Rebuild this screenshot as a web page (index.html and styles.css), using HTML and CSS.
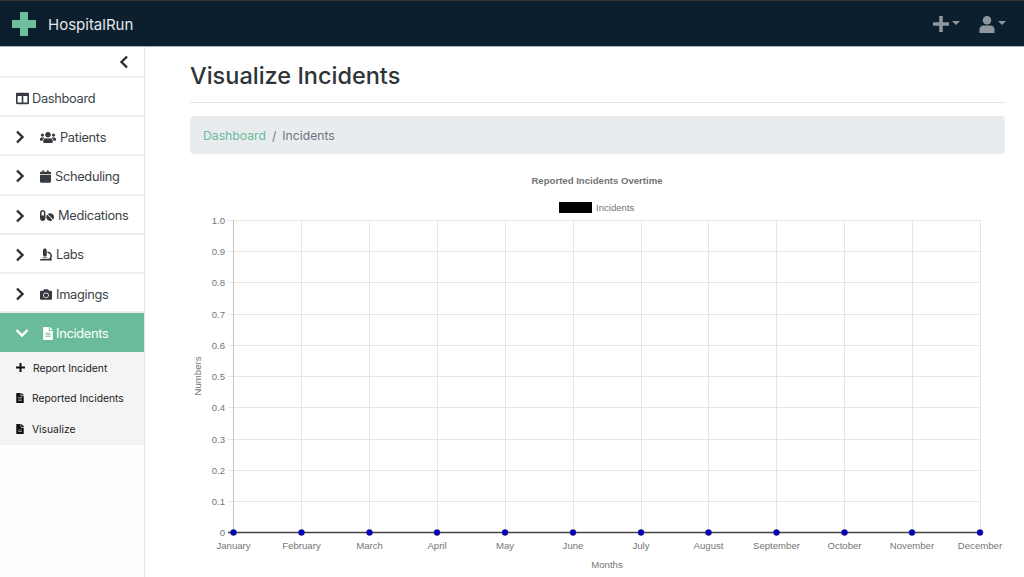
FILE: index.html
```html
<!DOCTYPE html>
<html lang="en">
<head>
    <meta charset="UTF-8">
    <title>HospitalRun</title>
    <link rel="stylesheet" href="styles.css">
</head>
<body>
    <nav class="navbar">
        <div class="brand">
            <svg class="logo" width="24" height="24" viewBox="0 0 24 24"><path d="M8 0h8v8h8v8h-8v8H8v-8H0V8h8z" fill="#6fbf9f"/></svg>
            <span>HospitalRun</span>
        </div>
        <div class="nav-icons">
            <div class="nav-item">
                <svg width="16" height="16" viewBox="0 0 16 16"><path d="M6.2 0h3.6v6.2H16v3.6H9.800V16H6.200V9.800H0V6.200h6.200z" fill="#8f979e"/></svg>
                <i class="caret"></i>
            </div>
            <div class="nav-item">
                <svg width="16" height="17" viewBox="0 0 16 18"><circle cx="8" cy="4.500" r="4.500" fill="#8f979e"/><path d="M0 18v-3.500C0 11.500 2 10 4.500 10h7c2.500 0 4.500 1.500 4.500 4.500V18z" fill="#8f979e"/></svg>
                <i class="caret"></i>
            </div>
        </div>
    </nav>
    <div class="layout">
        <aside class="sidebar">
            <div class="collapse-row">
                <svg width="10" height="14" viewBox="0 0 10 14"><path d="M8 1.500 2.500 7 8 12.500" fill="none" stroke="#2b2f33" stroke-width="2.400"/></svg>
            </div>
            <a class="side-item plain">
                <svg class="icon" width="13" height="13" viewBox="0 0 512 512"><path d="M464 32H48C21.490 32 0 53.490 0 80v352c0 26.510 21.490 48 48 48h416c26.510 0 48-21.490 48-48V80c0-26.510-21.490-48-48-48zM224 416H64V160h160v256zm224 0H288V160h160v256z"/></svg>
                Dashboard
            </a>
            <a class="side-item">
                <svg class="chev" width="10" height="14" viewBox="0 0 10 14"><path d="M2 1.500 7.500 7 2 12.500" fill="none" stroke="#2b2f33" stroke-width="2.400"/></svg>
                <svg class="icon" width="16" height="13" viewBox="0 0 640 512"><path d="M96 224c35.300 0 64-28.700 64-64s-28.700-64-64-64-64 28.700-64 64 28.700 64 64 64zm448 0c35.300 0 64-28.700 64-64s-28.700-64-64-64-64 28.700-64 64 28.700 64 64 64zm32 32h-64c-17.600 0-33.500 7.100-45.100 18.600 40.300 22.100 68.900 62 75.100 109.400h66c17.700 0 32-14.300 32-32v-32c0-35.300-28.700-64-64-64zm-256 0c61.900 0 112-50.100 112-112S381.900 32 320 32 208 82.100 208 144s50.100 112 112 112zm76.800 32h-8.300c-20.800 10-43.900 16-68.500 16s-47.600-6-68.500-16h-8.300C179.600 288 128 339.600 128 403.200V432c0 26.500 21.500 48 48 48h288c26.500 0 48-21.500 48-48v-28.800c0-63.600-51.600-115.200-115.200-115.200zm-223.700-13.400C161.500 263.100 145.600 256 128 256H64c-35.300 0-64 28.700-64 64v32c0 17.700 14.300 32 32 32h65.900c6.300-47.400 34.900-87.300 75.200-109.400z"/></svg>
                Patients
            </a>
            <a class="side-item">
                <svg class="chev" width="10" height="14" viewBox="0 0 10 14"><path d="M2 1.500 7.500 7 2 12.500" fill="none" stroke="#2b2f33" stroke-width="2.400"/></svg>
                <svg class="icon" width="11" height="13" viewBox="0 0 448 512"><path d="M12 192h424c6.600 0 12 5.400 12 12v260c0 26.500-21.500 48-48 48H48c-26.500 0-48-21.500-48-48V204c0-6.600 5.400-12 12-12zm436-44v-36c0-26.500-21.500-48-48-48h-48V12c0-6.600-5.400-12-12-12h-40c-6.600 0-12 5.400-12 12v52H160V12c0-6.600-5.400-12-12-12h-40c-6.600 0-12 5.400-12 12v52H48C21.500 64 0 85.500 0 112v36c0 6.600 5.400 12 12 12h424c6.600 0 12-5.400 12-12z"/></svg>
                Scheduling
            </a>
            <a class="side-item">
                <svg class="chev" width="10" height="14" viewBox="0 0 10 14"><path d="M2 1.500 7.500 7 2 12.500" fill="none" stroke="#2b2f33" stroke-width="2.400"/></svg>
                <svg class="icon" width="14" height="13" viewBox="0 0 576 512"><path d="M112 32C50.100 32 0 82.100 0 144v224c0 61.900 50.100 112 112 112s112-50.100 112-112V144c0-61.900-50.100-112-112-112zm48 224H64V144c0-26.500 21.500-48 48-48s48 21.500 48 48v112zm139.700-29.700c-3.500-3.500-9.400-3.100-12.300.8-45.300 62.500-40.400 150.100 15.900 206.400 56.300 56.300 143.900 61.200 206.400 15.900 4-2.900 4.300-8.800.8-12.300L299.700 226.300zm229.800-19c-56.300-56.300-143.900-61.200-206.400-15.900-4 2.900-4.300 8.800-.8 12.300l210.900 210.900c3.500 3.500 9.400 3.100 12.300-.8 45.300-62.600 40.500-150.100-15.900-206.500z"/></svg>
                Medications
            </a>
            <a class="side-item">
                <svg class="chev" width="10" height="14" viewBox="0 0 10 14"><path d="M2 1.500 7.500 7 2 12.500" fill="none" stroke="#2b2f33" stroke-width="2.400"/></svg>
                <svg class="icon" width="12" height="13" viewBox="0 0 512 512"><path d="M160 320h12v16c0 8.840 7.160 16 16 16h40c8.840 0 16-7.160 16-16v-16h12c17.670 0 32-14.330 32-32V64c0-17.670-14.330-32-32-32V16c0-8.840-7.160-16-16-16h-64c-8.840 0-16 7.160-16 16v16c-17.670 0-32 14.330-32 32v224c0 17.670 14.330 32 32 32zm304 128h-1.290C493.240 413.990 512 369.170 512 320c0-105.880-86.120-192-192-192v64c70.580 0 128 57.420 128 128s-57.420 128-128 128H48c-26.510 0-48 21.490-48 48 0 8.840 7.160 16 16 16h480c8.840 0 16-7.160 16-16 0-26.510-21.490-48-48-48zm-360-32h208c4.420 0 8-3.580 8-8v-16c0-4.420-3.580-8-8-8H104c-4.420 0-8 3.580-8 8v16c0 4.420 3.580 8 8 8z"/></svg>
                Labs
            </a>
            <a class="side-item">
                <svg class="chev" width="10" height="14" viewBox="0 0 10 14"><path d="M2 1.500 7.500 7 2 12.500" fill="none" stroke="#2b2f33" stroke-width="2.400"/></svg>
                <svg class="icon" width="12" height="13" viewBox="0 0 512 512"><path d="M512 144v288c0 26.500-21.500 48-48 48H48c-26.500 0-48-21.500-48-48V144c0-26.500 21.500-48 48-48h88l12.300-32.900c7-18.700 24.900-31.100 44.900-31.100h125.500c20 0 37.900 12.400 44.900 31.100L376 96h88c26.500 0 48 21.500 48 48zM376 288c0-66.200-53.800-120-120-120s-120 53.800-120 120 53.800 120 120 120 120-53.800 120-120zm-32 0c0 48.500-39.500 88-88 88s-88-39.500-88-88 39.500-88 88-88 88 39.500 88 88z"/></svg>
                Imagings
            </a>
            <a class="side-item active">
                <svg class="chev wide" width="14" height="10" viewBox="0 0 14 10"><path d="M1.500 2 7 7.500 12.500 2" fill="none" stroke="#fff" stroke-width="2.400"/></svg>
                <svg class="icon" width="10" height="13" viewBox="0 0 384 512"><path d="M224 136V0H24C10.700 0 0 10.700 0 24v464c0 13.300 10.700 24 24 24h336c13.300 0 24-10.700 24-24V160H248c-13.200 0-24-10.800-24-24zm64 236c0 6.600-5.400 12-12 12H108c-6.600 0-12-5.400-12-12v-8c0-6.600 5.400-12 12-12h168c6.600 0 12 5.400 12 12v8zm0-64c0 6.600-5.400 12-12 12H108c-6.600 0-12-5.400-12-12v-8c0-6.600 5.400-12 12-12h168c6.600 0 12 5.400 12 12v8zm0-72v8c0 6.600-5.400 12-12 12H108c-6.600 0-12-5.400-12-12v-8c0-6.600 5.400-12 12-12h168c6.600 0 12 5.400 12 12zm96-114.100v6.100H256V0h6.100c6.400 0 12.500 2.500 17 7l97.900 98c4.500 4.500 7 10.600 7 16.900z"/></svg>
                Incidents
            </a>
            <div class="submenu">
                <a class="sub-item">
                    <svg width="9" height="9" viewBox="0 0 9 9"><path d="M3.500 0h2v3.500H9v2H5.500V9h-2V5.500H0v-2h3.500z"/></svg>
                    Report Incident
                </a>
                <a class="sub-item">
                    <svg width="8" height="10" viewBox="0 0 384 512"><path d="M224 136V0H24C10.700 0 0 10.700 0 24v464c0 13.300 10.700 24 24 24h336c13.300 0 24-10.700 24-24V160H248c-13.200 0-24-10.800-24-24zm64 236c0 6.600-5.400 12-12 12H108c-6.600 0-12-5.400-12-12v-8c0-6.600 5.400-12 12-12h168c6.600 0 12 5.400 12 12v8zm0-64c0 6.600-5.400 12-12 12H108c-6.600 0-12-5.400-12-12v-8c0-6.600 5.400-12 12-12h168c6.600 0 12 5.400 12 12v8zm0-72v8c0 6.600-5.400 12-12 12H108c-6.600 0-12-5.400-12-12v-8c0-6.600 5.400-12 12-12h168c6.600 0 12 5.400 12 12zm96-114.100v6.100H256V0h6.100c6.400 0 12.500 2.500 17 7l97.900 98c4.500 4.500 7 10.600 7 16.900z"/></svg>
                    Reported Incidents
                </a>
                <a class="sub-item">
                    <svg width="8" height="10" viewBox="0 0 384 512"><path d="M224 136V0H24C10.700 0 0 10.700 0 24v464c0 13.300 10.700 24 24 24h336c13.300 0 24-10.700 24-24V160H248c-13.200 0-24-10.800-24-24zm64 236c0 6.600-5.400 12-12 12H108c-6.600 0-12-5.400-12-12v-8c0-6.600 5.400-12 12-12h168c6.600 0 12 5.400 12 12v8zm0-64c0 6.600-5.400 12-12 12H108c-6.600 0-12-5.400-12-12v-8c0-6.600 5.400-12 12-12h168c6.600 0 12 5.400 12 12zm96-114.100v6.100H256V0h6.100c6.400 0 12.500 2.500 17 7l97.900 98c4.500 4.500 7 10.600 7 16.900z"/></svg>
                    Visualize
                </a>
            </div>
        </aside>
        <main class="content">
            <h1 class="page-title">Visualize Incidents</h1>
            <div class="breadcrumb">
                <a>Dashboard</a>
                <span class="sep">/</span>
                <span>Incidents</span>
            </div>
            <svg class="chart" width="815" height="414" viewBox="190 163 815 414">
                <text class="chart-title" x="597" y="184">Reported Incidents Overtime</text>
                <rect x="559" y="202" width="33" height="11" fill="#000"/>
                <text class="tick legend-label" x="596" y="211">Incidents</text>

                <g class="grid">
                    <path d="M233.500 220V533M301.500 220V533M369.500 220V533M437.500 220V533M505.500 220V533M573.500 220V533M641.500 220V533M708.500 220V533M776.500 220V533M844.500 220V533M912.500 220V533M980.500 220V533"/>
                    <path d="M228 220.500H980M228 251.500H980M228 282.500H980M228 314.500H980M228 345.500H980M228 376.500H980M228 407.500H980M228 439.500H980M228 470.500H980M228 501.500H980"/>
                </g>
                <path class="axis-y" d="M233.500 220V533"/>
                <g class="tick tick-y">
                    <text x="225" y="224">1.0</text>
                    <text x="225" y="255">0.9</text>
                    <text x="225" y="286">0.8</text>
                    <text x="225" y="318">0.7</text>
                    <text x="225" y="349">0.6</text>
                    <text x="225" y="380">0.5</text>
                    <text x="225" y="411">0.4</text>
                    <text x="225" y="443">0.3</text>
                    <text x="225" y="474">0.2</text>
                    <text x="225" y="505">0.1</text>
                    <text x="225" y="536">0</text>
                </g>
                <text class="tick" transform="translate(201 376) rotate(-90)">Numbers</text>

                <path class="line" d="M228 532.500H980"/>
                <g class="points">
                    <circle cx="233.500" cy="532.500" r="3"/>
                    <circle cx="301.500" cy="532.500" r="3"/>
                    <circle cx="369.500" cy="532.500" r="3"/>
                    <circle cx="437" cy="532.500" r="3"/>
                    <circle cx="505" cy="532.500" r="3"/>
                    <circle cx="573" cy="532.500" r="3"/>
                    <circle cx="641" cy="532.500" r="3"/>
                    <circle cx="708.500" cy="532.500" r="3"/>
                    <circle cx="776.500" cy="532.500" r="3"/>
                    <circle cx="844.500" cy="532.500" r="3"/>
                    <circle cx="912" cy="532.500" r="3"/>
                    <circle cx="980" cy="532.500" r="3"/>
                </g>
                <g class="tick">
                    <text x="233.500" y="549">January</text>
                    <text x="301.500" y="549">February</text>
                    <text x="369.500" y="549">March</text>
                    <text x="437" y="549">April</text>
                    <text x="505" y="549">May</text>
                    <text x="573" y="549">June</text>
                    <text x="641" y="549">July</text>
                    <text x="708.500" y="549">August</text>
                    <text x="776.500" y="549">September</text>
                    <text x="844.500" y="549">October</text>
                    <text x="912" y="549">November</text>
                    <text x="980" y="549">December</text>
                </g>
                <text class="tick" x="607" y="568">Months</text>
            </svg>
        </main>
    </div>
</body>
</html>
```

FILE: styles.css
```css
* {
    box-sizing: border-box;
}
html, body {
    height: 100%;
}
body {
    margin: 0;
    overflow: hidden;
    font-family: Inter, "Noto Sans", sans-serif;
    color: #3c4248;
    background-color: white;
}
.navbar {
    height: 47px;
    display: flex;
    justify-content: space-between;
    align-items: center;
    padding: 1px 18px 0 12px;
    background-color: #0b1f2f;
    border-top: 1px solid #333;
    border-bottom: 1px solid #a9b0b4;
}
.brand {
    display: flex;
    align-items: center;
    gap: 12px;
    color: #e4e7e9;
    font-size: 15px;
}
.nav-icons {
    display: flex;
    gap: 19px;
    margin-top: 1px;
}
.nav-item {
    display: flex;
    align-items: flex-start;
    gap: 3px;
}
.caret {
    margin-top: 5px;
    border-top: 4px solid #8f979e;
    border-left: 4px solid transparent;
    border-right: 4px solid transparent;
}
.layout {
    display: flex;
    height: 530px;
}
.sidebar {
    width: 145px;
    flex-shrink: 0;
    background-color: #fcfffd;
    border-right: 1px solid #e8e8e8;
}
.collapse-row {
    height: 31px;
    display: flex;
    justify-content: flex-end;
    align-items: center;
    padding-right: 15px;
    background-color: white;
    border-bottom: 2px solid #eee;
}
.side-item {
    height: 39.2px;
    display: flex;
    align-items: center;
    padding: 3px 0 0 15px;
    font-size: 12.8px;
    letter-spacing: -0.3px;
    background-color: white;
    border-bottom: 2px solid #eee;
}
.side-item svg {
    flex-shrink: 0;
    fill: #343a40;
}
.side-item.plain {
    padding-left: 16px;
}
.side-item .chev {
    margin-right: 15px;
}
.side-item .chev.wide {
    margin-right: 14px;
}
.side-item .icon {
    margin-right: 4px;
}
.side-item.plain .icon {
    margin-right: 3px;
}
.side-item.active {
    padding-top: 1px;
    color: white;
    background-color: #6abb9a;
    border-bottom: none;
}
.side-item.active .icon {
    fill: white;
    margin-right: 3px;
}
.submenu {
    background-color: #f4f4f4;
    padding-bottom: 1px;
}
.sub-item {
    height: 30.5px;
    display: flex;
    align-items: center;
    gap: 8px;
    padding-left: 16px;
    font-size: 10.3px;
    color: #222;
}
.sub-item svg {
    fill: #111;
}
.content {
    flex: 1;
    min-width: 0;
    padding: 0 19px 0 45px;
}
.page-title {
    margin: 0;
    height: 56px;
    padding-top: 13px;
    font-size: 23.5px;
    font-weight: 500;
    line-height: 32px;
    color: #2f3438;
    border-bottom: 1px solid #e2e4e6;
}
.breadcrumb {
    height: 38px;
    margin-top: 13px;
    display: flex;
    align-items: center;
    gap: 6px;
    padding: 0 13px;
    font-size: 12.2px;
    color: #6c757d;
    background-color: #e9ecef;
    border-radius: 4px;
}
.breadcrumb a {
    color: #6abb9a;
}
.chart {
    display: block;
    margin-top: 9px;
}
.chart text {
    font-family: "Liberation Sans", Arial, sans-serif;
}
.chart-title {
    font-size: 9.6px;
    font-weight: bold;
    fill: #757575;
    text-anchor: middle;
}
.tick {
    font-size: 9.6px;
    fill: #757575;
    text-anchor: middle;
}
.tick-y {
    text-anchor: end;
}
.legend-label {
    text-anchor: start;
}
.grid path {
    fill: none;
    stroke: #e6e6e6;
    stroke-width: 1;
}
.axis-y {
    stroke: #c4c4c4;
    stroke-width: 1;
}
.line {
    stroke: #444;
    stroke-width: 1.5;
}
.points circle {
    fill: #0000c8;
    stroke: #1c1c3c;
    stroke-width: 0.5;
}
```
